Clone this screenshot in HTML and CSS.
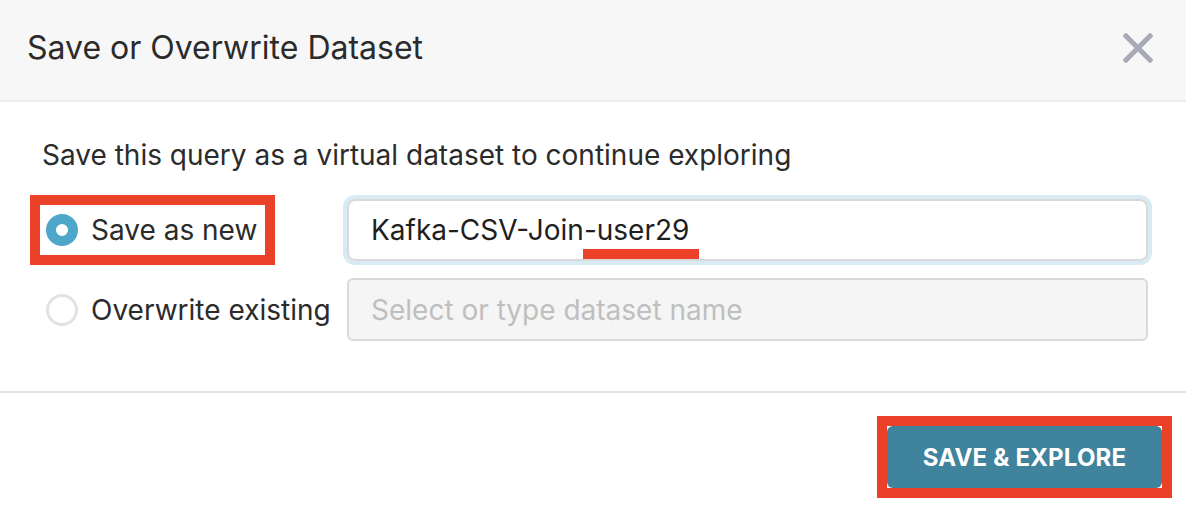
FILE: index.html
```html
<!DOCTYPE html>
<html lang="en">
<head>
<meta charset="utf-8">
<title>Save or Overwrite Dataset</title>
<link rel="stylesheet" href="styles.css">
</head>
<body>
<div class="modal">
  <header class="modal-header">
    <h1 class="modal-title">Save or Overwrite Dataset</h1>
    <button class="close-btn" aria-label="Close">
      <svg width="30" height="30" viewBox="0 0 30 30" aria-hidden="true">
        <path d="M3 3 L27 27 M27 3 L3 27" stroke="#a8aab8" stroke-width="5" stroke-linecap="square" fill="none"/>
      </svg>
    </button>
  </header>
  <main class="modal-body">
    <p class="intro">Save this query as a virtual dataset to continue exploring</p>
    <div class="form-grid">
      <label class="option option-marked"><span class="radio radio-checked"></span>Save as new</label>
      <div class="field field-focus">Kafka-CSV-Join<span class="mark">-user29</span></div>
      <label class="option"><span class="radio"></span>Overwrite existing</label>
      <div class="field field-disabled">Select or type dataset name</div>
    </div>
  </main>
  <footer class="modal-footer">
    <span class="btn-marked"><button class="btn-primary">SAVE &amp; EXPLORE</button></span>
  </footer>
</div>
</body>
</html>
```

FILE: styles.css
```css
* { box-sizing: border-box; }
html, body { margin: 0; padding: 0; background: #fff; }
body { font-family: Inter, "Noto Sans", sans-serif; color: #2b2b2b; }

.modal { width: 1186px; height: 514px; overflow: hidden; display: flex; flex-direction: column; }

.modal-header {
  height: 102px;
  background: #f7f7f7;
  border-bottom: 2px solid #eeeeee;
  display: flex;
  align-items: center;
  justify-content: space-between;
  padding: 0 33px 4px 27px;
}
.modal-title { margin: 0; font-size: 32px; font-weight: 400; line-height: 40px; color: #2b2b2b; }
.close-btn { border: 0; background: none; padding: 0; width: 30px; height: 30px; display: block; cursor: pointer; }
.close-btn svg { display: block; }

.modal-body { padding: 33px 38px 50px 40px; }
.intro { margin: 0 0 24px 2px; font-size: 28px; line-height: 40px; color: #2b2b2b; }

.form-grid {
  display: grid;
  grid-template-columns: 307px 1fr;
  row-gap: 17px;
  align-items: center;
}

.option {
  display: flex;
  align-items: center;
  gap: 13px;
  height: 50px;
  padding-left: 6px;
  font-size: 28px;
  color: #2b2b2b;
  white-space: nowrap;
}
.option-marked { width: 225px; outline: 10px solid #ea4128; }

.radio {
  width: 32px; height: 32px; border-radius: 50%;
  border: 3px solid #e2e2e2; background: #fff; flex: none;
}
.radio-checked { border: 10px solid #4ea6c8; }

.field {
  height: 62px;
  border: 2px solid #d9d9d9;
  border-radius: 8px;
  padding: 0 22px;
  display: flex;
  align-items: center;
  font-size: 28px;
  color: #1f1f1f;
  white-space: nowrap;
}
.field-focus { box-shadow: 0 0 0 4px #d8ebf3; }
.field-disabled { background: #f5f5f5; color: #bfbfbf; border-radius: 6px; height: 63px; }

.mark { position: relative; }
.mark::after {
  content: "";
  position: absolute;
  left: -1px; right: -10px; bottom: -12px;
  height: 10px;
  background: #ea4128;
}

.modal-footer {
  border-top: 2px solid #e2e2e2;
  display: flex;
  justify-content: flex-end;
  padding: 23px 14px 0 0;
}
.btn-marked { display: inline-flex; border: 10px solid #ea4128; }
.btn-primary {
  width: 275px; height: 62px;
  border: 0; border-radius: 6px;
  background: #3f839c;
  color: #fff;
  font-family: Inter, "Noto Sans", sans-serif;
  font-size: 24px; font-weight: 700;
  letter-spacing: 0.2px;
  cursor: pointer;
}
```
